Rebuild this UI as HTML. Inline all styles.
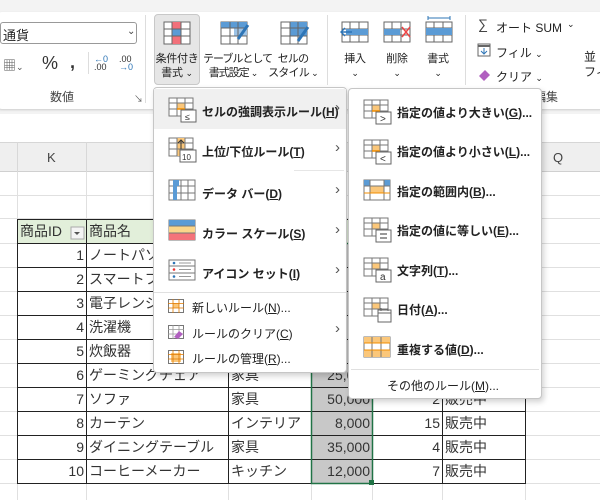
<!DOCTYPE html>
<html><head><meta charset="utf-8"><style>
*{margin:0;padding:0;box-sizing:border-box}
body{width:600px;height:500px;overflow:hidden;background:#fff;position:relative;font-family:"Liberation Sans","Noto Sans CJK JP",sans-serif;color:#222}
.a{position:absolute}
.t{font-size:12px;white-space:nowrap}
.c{font-size:11px;text-align:center;white-space:nowrap;line-height:14px;letter-spacing:-0.3px}
.mi{position:absolute;left:0;width:100%;font-size:12px;font-weight:bold;white-space:nowrap}
.mi2{position:absolute;left:0;width:100%;font-size:12px;white-space:nowrap}
.chev{position:absolute;right:6px;font-size:15px;color:#555;font-weight:normal}
.cell{position:absolute;font-size:14px;color:#333;white-space:nowrap;line-height:24px}
</style></head><body>
<div class="a" style="left:0;top:0;width:600px;height:114px;background:#f3f3f3"></div>
<div class="a" style="left:-4px;top:12px;width:610px;height:97px;background:#fff;border-radius:6px;box-shadow:0 1px 2px #ccc"></div>
<div class="a" style="left:0;top:22px;width:137px;height:22px;border:1px solid #999;border-radius:3px;background:#fff"></div>
<div class="a t" style="left:3px;top:25px;font-size:13px">通貨</div>
<div class="a t" style="left:127px;top:26px;font-size:10px;color:#444">⌄</div>
<div class="a t" style="left:3px;top:55px;font-size:13px;color:#555">▦<span style="font-size:9px">⌄</span></div>
<div class="a t" style="left:42px;top:53px;font-size:18px;color:#333">%</div>
<div class="a t" style="left:70px;top:52px;font-size:18px;font-weight:bold;color:#333">,</div>
<div class="a" style="left:88px;top:52px;width:1px;height:22px;background:#ddd"></div>
<div class="a t" style="left:94px;top:55px;font-size:9px;color:#2e75b6;line-height:8px">←0<br><span style="color:#333">.00</span></div>
<div class="a t" style="left:119px;top:55px;font-size:9px;color:#333;line-height:8px">.00<br><span style="color:#2e75b6">→0</span></div>
<div class="a t" style="left:50px;top:88px;font-size:12px;color:#444">数値</div>
<div class="a t" style="left:134px;top:92px;font-size:9px;color:#555">↘</div>
<div class="a" style="left:145px;top:15px;width:1px;height:88px;background:#ddd"></div>
<div class="a" style="left:154px;top:14px;width:46px;height:71px;background:#e6e6e6;border:1px solid #c8c8c8;border-radius:4px"></div>
<svg class="a" style="left:163px;top:21px" width="28" height="24"><rect x="1" y="1" width="26" height="22" fill="#fff" stroke="#666"/><rect x="9" y="1" width="9" height="7" fill="#f2707a"/><rect x="9" y="8" width="9" height="7" fill="#5b9bd5"/><rect x="9" y="15" width="9" height="8" fill="#f2707a"/><path d="M1 8h26M1 15h26M9 1v22M18 1v22" stroke="#666" fill="none"/></svg>
<div class="a c" style="left:154px;top:52px;width:46px">条件付き<br>書式 <span style="font-size:9px">⌄</span></div>
<svg class="a" style="left:220px;top:21px" width="30" height="26"><rect x="1" y="1" width="26" height="22" fill="#fff" stroke="#666"/><rect x="1" y="1" width="26" height="6" fill="#5b9bd5"/><rect x="14" y="7" width="13" height="8" fill="#9dc3e6"/><path d="M1 7h26M1 15h26M10 1v22M18 1v22" stroke="#666" fill="none"/><path d="M28 4l-10 14" stroke="#2e75b6" stroke-width="3"/></svg>
<div class="a c" style="left:203px;top:52px;width:60px;letter-spacing:-1px">テーブルとして<br>書式設定 <span style="font-size:9px">⌄</span></div>
<svg class="a" style="left:280px;top:21px" width="30" height="26"><rect x="1" y="1" width="26" height="22" fill="#fff" stroke="#666"/><rect x="10" y="1" width="17" height="14" fill="#5b9bd5"/><path d="M1 7h26M1 15h26M10 1v22M18 1v22" stroke="#666" fill="none"/><path d="M28 6l-10 14" stroke="#2e75b6" stroke-width="3"/></svg>
<div class="a c" style="left:268px;top:52px;width:50px;letter-spacing:-0.8px">セルの<br>スタイル <span style="font-size:9px">⌄</span></div>
<div class="a" style="left:327px;top:15px;width:1px;height:70px;background:#ddd"></div>
<svg class="a" style="left:340px;top:20px" width="30" height="24"><rect x="2" y="2" width="26" height="20" fill="#fff" stroke="#666"/><path d="M2 9h26M2 15h26M10 2v20M19 2v20" stroke="#666"/><rect x="6" y="9" width="22" height="6" fill="#5b9bd5"/><path d="M12 12H1M5 8l-4 4 4 4" stroke="#2e75b6" fill="none" stroke-width="1.5"/></svg>
<div class="a c" style="left:340px;top:52px;width:30px">挿入<br><span style="font-size:9px">⌄</span></div>
<svg class="a" style="left:382px;top:20px" width="30" height="24"><rect x="2" y="2" width="26" height="20" fill="#fff" stroke="#666"/><path d="M2 9h26M2 15h26M10 2v20M19 2v20" stroke="#666"/><rect x="2" y="9" width="16" height="6" fill="#5b9bd5"/><path d="M20 7l8 10M28 7l-8 10" stroke="#e44" stroke-width="1.5"/></svg>
<div class="a c" style="left:382px;top:52px;width:30px">削除<br><span style="font-size:9px">⌄</span></div>
<svg class="a" style="left:424px;top:16px" width="30" height="28"><path d="M4 2h22M4 0v4M26 0v4" stroke="#2e75b6"/><rect x="2" y="6" width="26" height="20" fill="#fff" stroke="#666"/><path d="M2 12h26M2 19h26M10 6v20M19 6v20" stroke="#666"/><rect x="2" y="12" width="26" height="7" fill="#5b9bd5"/></svg>
<div class="a c" style="left:423px;top:52px;width:30px">書式<br><span style="font-size:9px">⌄</span></div>
<div class="a" style="left:465px;top:15px;width:1px;height:70px;background:#ddd"></div>
<div class="a t" style="left:478px;top:16px;font-size:14px;color:#444">∑</div>
<div class="a t" style="left:496px;top:19px">オート SUM</div>
<div class="a t" style="left:567px;top:19px;font-size:9px">⌄</div>
<svg class="a" style="left:477px;top:43px" width="14" height="14"><rect x="1" y="1" width="12" height="12" fill="#fff" stroke="#666"/><path d="M1 3h12" stroke="#666" stroke-width="2"/><path d="M7 5v6M4 8l3 3 3-3" stroke="#2e75b6" fill="none"/></svg>
<div class="a t" style="left:496px;top:44px">フィル <span style="font-size:9px">⌄</span></div>
<svg class="a" style="left:477px;top:67px" width="14" height="14"><path d="M2 9l6-6 5 5-6 6z" fill="#b160c0"/></svg>
<div class="a t" style="left:496px;top:68px">クリア <span style="font-size:9px">⌄</span></div>
<div class="a t" style="left:584px;top:50px;line-height:15px">並<br>フィ</div>
<div class="a t" style="left:534px;top:88px;color:#444">編集</div>
<div class="a" style="left:0;top:114px;width:600px;height:28px;background:#fff"></div>
<div class="a" style="left:0;top:142px;width:600px;height:30px;background:#efefef;border-top:1px solid #d6d6d6;border-bottom:1px solid #d0d0d0"></div>
<div class="a" style="left:17px;top:142px;width:1px;height:30px;background:#d8d8d8"></div>
<div class="a" style="left:86px;top:142px;width:1px;height:30px;background:#d8d8d8"></div>
<div class="a" style="left:525px;top:142px;width:1px;height:30px;background:#d8d8d8"></div>
<div class="a t" style="left:47px;top:150px;font-size:13px;color:#444">K</div>
<div class="a t" style="left:553px;top:150px;font-size:13px;color:#444">Q</div>
<svg class="a" style="left:0;top:172px" width="600" height="328">
<g stroke="#e0e0e0">
<path d="M0 23.5h600M0 46.5h600M0 71.5h600M0 95.5h600M0 119.5h600M0 143.5h600M0 167.5h600M0 191.5h600M0 215.5h600M0 239.5h600M0 263.5h600M0 287.5h600M0 311.5h600"/>
<path d="M17.5 0v328M86.5 0v328M228.5 0v328M311.5 0v328M372.5 0v328M442.5 0v328M525.5 0v328"/>
</g>
<rect x="17" y="47" width="411" height="24" fill="#e2efda"/>
<rect x="311" y="71" width="61" height="240" fill="#c8c8c8"/>
<g stroke="#222" stroke-width="1">
<path d="M17.5 47.5h508M17.5 71.5h508M17.5 95.5h508M17.5 119.5h508M17.5 143.5h508M17.5 167.5h508M17.5 191.5h508M17.5 215.5h508M17.5 239.5h508M17.5 263.5h508M17.5 287.5h508M17.5 311.5h508"/>
<path d="M17.5 47v265M86.5 47v265M228.5 47v265M311.5 47v265M372.5 47v265M442.5 47v265M525.5 47v265"/>
</g>
<rect x="311.5" y="71.5" width="61" height="240" fill="none" stroke="#217346" stroke-width="1.5"/>
<rect x="369" y="308" width="5" height="5" fill="#217346"/>
<rect x="71" y="55" width="13" height="12" fill="#f4f4f4" stroke="#aaa"/>
<path d="M74 60l3 3 3-3z" fill="#555"/>
</svg>
<div class="cell" style="left:20px;top:219px">商品ID</div>
<div class="cell" style="left:89px;top:219px">商品名</div>
<div class="cell" style="left:17px;top:243px;width:67px;text-align:right">1</div><div class="cell" style="left:89px;top:243px">ノートパソ</div>
<div class="cell" style="left:17px;top:267px;width:67px;text-align:right">2</div><div class="cell" style="left:89px;top:267px">スマートフ</div>
<div class="cell" style="left:17px;top:291px;width:67px;text-align:right">3</div><div class="cell" style="left:89px;top:291px">電子レンジ</div>
<div class="cell" style="left:17px;top:315px;width:67px;text-align:right">4</div><div class="cell" style="left:89px;top:315px">洗濯機</div>
<div class="cell" style="left:17px;top:339px;width:67px;text-align:right">5</div><div class="cell" style="left:89px;top:339px">炊飯器</div>
<div class="cell" style="left:17px;top:363px;width:67px;text-align:right">6</div><div class="cell" style="left:89px;top:363px">ゲーミングチェア</div><div class="cell" style="left:231px;top:363px">家具</div><div class="cell" style="left:311px;top:363px;width:59px;text-align:right">25,000</div>
<div class="cell" style="left:17px;top:387px;width:67px;text-align:right">7</div><div class="cell" style="left:89px;top:387px">ソファ</div><div class="cell" style="left:231px;top:387px">家具</div><div class="cell" style="left:311px;top:387px;width:59px;text-align:right">50,000</div><div class="cell" style="left:372px;top:387px;width:68px;text-align:right">2</div><div class="cell" style="left:445px;top:387px">販売中</div>
<div class="cell" style="left:17px;top:411px;width:67px;text-align:right">8</div><div class="cell" style="left:89px;top:411px">カーテン</div><div class="cell" style="left:231px;top:411px">インテリア</div><div class="cell" style="left:311px;top:411px;width:59px;text-align:right">8,000</div><div class="cell" style="left:372px;top:411px;width:68px;text-align:right">15</div><div class="cell" style="left:445px;top:411px">販売中</div>
<div class="cell" style="left:17px;top:435px;width:67px;text-align:right">9</div><div class="cell" style="left:89px;top:435px">ダイニングテーブル</div><div class="cell" style="left:231px;top:435px">家具</div><div class="cell" style="left:311px;top:435px;width:59px;text-align:right">35,000</div><div class="cell" style="left:372px;top:435px;width:68px;text-align:right">4</div><div class="cell" style="left:445px;top:435px">販売中</div>
<div class="cell" style="left:17px;top:459px;width:67px;text-align:right">10</div><div class="cell" style="left:89px;top:459px">コーヒーメーカー</div><div class="cell" style="left:231px;top:459px">キッチン</div><div class="cell" style="left:311px;top:459px;width:59px;text-align:right">12,000</div><div class="cell" style="left:372px;top:459px;width:68px;text-align:right">7</div><div class="cell" style="left:445px;top:459px">販売中</div>

<div class="a" style="left:153px;top:87px;width:194px;height:286px;background:#fff;border:1px solid #c6c6c6;border-radius:4px;box-shadow:2px 3px 6px rgba(0,0,0,.18)">
 <div class="a" style="left:0;top:1px;width:192px;height:40px;background:#f0f0f0"></div>
 <div class="a" style="left:0;top:204px;width:192px;height:1px;background:#e0e0e0"></div>
 <div class="a" style="left:140px;top:82px;width:50px;height:1px;background:#e6e6e6"></div>
 <svg class="a" style="left:14px;top:9px" width="30" height="26"><rect x="1" y="1" width="24" height="18" fill="#fff" stroke="#777"/><rect x="9" y="6" width="8" height="6" fill="#fbc77a"/><path d="M1 6h24M1 12h24M9 1v18M17 1v18" stroke="#777"/><path d="M9 12h8" stroke="#f08c00" stroke-width="1.5"/><rect x="13" y="13" width="15" height="12" fill="#fff" stroke="#666"/><text x="17" y="23" font-size="9" fill="#333">≤</text></svg>
 <div class="mi" style="left:48px;top:15px">セルの強調表示ルール(<u>H</u>)</div><div class="chev" style="top:11px">›</div>
 <svg class="a" style="left:14px;top:49px" width="30" height="26"><rect x="1" y="1" width="24" height="18" fill="#fff" stroke="#777"/><rect x="9" y="1" width="8" height="18" fill="#fbc77a"/><path d="M1 6h24M1 12h24M9 1v18M17 1v18" stroke="#777"/><path d="M13 12V3M10 6l3-3 3 3" stroke="#333" fill="none"/><rect x="12" y="13" width="16" height="12" fill="#fff" stroke="#666"/><text x="14" y="23" font-size="8" fill="#333">10</text></svg>
 <div class="mi" style="left:48px;top:55px">上位/下位ルール(<u>T</u>)</div><div class="chev" style="top:51px">›</div>
 <svg class="a" style="left:14px;top:91px" width="30" height="24"><rect x="1" y="1" width="26" height="20" fill="#fff" stroke="#777"/><path d="M1 7h26M1 14h26M13 1v20M20 1v20" stroke="#777"/><rect x="5" y="1" width="6" height="6" fill="#5b9bd5"/><rect x="5" y="7" width="4" height="14" fill="#5b9bd5"/></svg>
 <div class="mi" style="left:48px;top:97px">データ バー(<u>D</u>)</div><div class="chev" style="top:93px">›</div>
 <svg class="a" style="left:14px;top:131px" width="30" height="24"><rect x="1" y="1" width="26" height="20" fill="#fff" stroke="#777"/><rect x="1" y="1" width="26" height="6" fill="#5b9bd5"/><rect x="1" y="7" width="26" height="7" fill="#fbd58a"/><rect x="1" y="14" width="26" height="7" fill="#f4737a"/><path d="M1 7h26M1 14h26" stroke="#777"/></svg>
 <div class="mi" style="left:48px;top:137px">カラー スケール(<u>S</u>)</div><div class="chev" style="top:133px">›</div>
 <svg class="a" style="left:14px;top:171px" width="30" height="24"><rect x="1" y="1" width="26" height="20" fill="#fff" stroke="#777"/><path d="M1 7h26M1 14h26" stroke="#777"/><circle cx="6" cy="4" r="1.3" fill="#2e75b6"/><circle cx="6" cy="10.5" r="1.3" fill="#e33"/><circle cx="6" cy="17.5" r="1.3" fill="#2e75b6"/><path d="M11 4h12M11 10.5h12M11 17.5h12" stroke="#999"/></svg>
 <div class="mi" style="left:48px;top:177px">アイコン セット(<u>I</u>)</div><div class="chev" style="top:173px">›</div>
 <svg class="a" style="left:14px;top:211px" width="16" height="14"><rect x="0.5" y="0.5" width="15" height="13" fill="#fff" stroke="#777"/><rect x="5" y="4" width="6" height="5" fill="#fbc77a"/><path d="M0 4.5h16M0 9h16M5 0v14M11 0v14" stroke="#e07a00" stroke-width=".8"/></svg>
 <div class="mi2" style="left:38px;top:211px">新しいルール(<u>N</u>)...</div>
 <svg class="a" style="left:14px;top:237px" width="16" height="14"><rect x="0.5" y="0.5" width="15" height="13" fill="#fff" stroke="#777"/><path d="M0 4.5h16M0 9h16M5 0v14M11 0v14" stroke="#999" stroke-width=".8"/><path d="M6 12l5-6 4 3-5 5z" fill="#b160c0"/></svg>
 <div class="mi2" style="left:38px;top:237px">ルールのクリア(<u>C</u>)</div><div class="chev" style="top:232px">›</div>
 <svg class="a" style="left:14px;top:262px" width="16" height="14"><rect x="0.5" y="0.5" width="15" height="13" fill="#fff" stroke="#777"/><rect x="3" y="3" width="10" height="9" fill="#fbc77a"/><path d="M0 4.5h16M0 9h16M5 0v14M11 0v14" stroke="#e07a00" stroke-width=".8"/></svg>
 <div class="mi2" style="left:38px;top:262px">ルールの管理(<u>R</u>)...</div>
</div>

<div class="a" style="left:348px;top:88px;width:194px;height:311px;background:#fff;border:1px solid #c6c6c6;border-radius:4px;box-shadow:2px 3px 6px rgba(0,0,0,.18)">
 <div class="a" style="left:2px;top:280px;width:188px;height:1px;background:#e0e0e0"></div>
 <svg class="a" style="left:14px;top:10px" width="30" height="28"><rect x="1" y="1" width="24" height="18" fill="#fff" stroke="#777"/><rect x="9" y="6" width="8" height="6" fill="#fbc77a"/><path d="M1 6h24M1 12h24M9 1v18M17 1v18" stroke="#777"/><path d="M9 12h8" stroke="#f08c00" stroke-width="1.5"/><rect x="13" y="13" width="15" height="12" fill="#fff" stroke="#666"/><text x="17" y="23" font-size="10" fill="#333">&gt;</text></svg>
 <div class="mi" style="left:48px;top:15px">指定の値より大きい(<u>G</u>)...</div>
 <svg class="a" style="left:14px;top:50px" width="30" height="28"><rect x="1" y="1" width="24" height="18" fill="#fff" stroke="#777"/><rect x="9" y="6" width="8" height="6" fill="#fbc77a"/><path d="M1 6h24M1 12h24M9 1v18M17 1v18" stroke="#777"/><path d="M9 12h8" stroke="#f08c00" stroke-width="1.5"/><rect x="13" y="13" width="15" height="12" fill="#fff" stroke="#666"/><text x="17" y="23" font-size="10" fill="#333">&lt;</text></svg>
 <div class="mi" style="left:48px;top:54px">指定の値より小さい(<u>L</u>)...</div>
 <svg class="a" style="left:14px;top:90px" width="30" height="24"><rect x="1" y="1" width="26" height="20" fill="#fff" stroke="#777"/><rect x="1" y="1" width="6" height="6" fill="#5b9bd5"/><rect x="21" y="1" width="6" height="6" fill="#5b9bd5"/><rect x="7" y="7" width="14" height="7" fill="#fbc77a"/><path d="M1 7h26M1 14h26M7 1v20M21 1v20" stroke="#777"/><path d="M1 14h26" stroke="#f08c00"/></svg>
 <div class="mi" style="left:48px;top:94px">指定の範囲内(<u>B</u>)...</div>
 <svg class="a" style="left:14px;top:128px" width="30" height="28"><rect x="1" y="1" width="24" height="18" fill="#fff" stroke="#777"/><rect x="9" y="6" width="8" height="6" fill="#fbc77a"/><path d="M1 6h24M1 12h24M9 1v18M17 1v18" stroke="#777"/><rect x="13" y="13" width="15" height="12" fill="#fff" stroke="#666"/><path d="M17 17h7M17 21h7" stroke="#333"/></svg>
 <div class="mi" style="left:48px;top:133px">指定の値に等しい(<u>E</u>)...</div>
 <svg class="a" style="left:14px;top:168px" width="30" height="28"><rect x="1" y="1" width="24" height="18" fill="#fff" stroke="#777"/><rect x="9" y="6" width="8" height="6" fill="#fbc77a"/><path d="M1 6h24M1 12h24M9 1v18M17 1v18" stroke="#777"/><rect x="13" y="13" width="15" height="12" fill="#fff" stroke="#666"/><text x="17" y="23" font-size="10" fill="#333">a</text></svg>
 <div class="mi" style="left:48px;top:173px">文字列(<u>T</u>)...</div>
 <svg class="a" style="left:14px;top:208px" width="30" height="28"><rect x="1" y="1" width="24" height="18" fill="#fff" stroke="#777"/><rect x="9" y="6" width="8" height="6" fill="#fbc77a"/><path d="M1 6h24M1 12h24M9 1v18M17 1v18" stroke="#777"/><rect x="15" y="13" width="13" height="12" fill="#fff" stroke="#666"/><path d="M15 16h13M18 11v3M25 11v3" stroke="#666"/></svg>
 <div class="mi" style="left:48px;top:212px">日付(<u>A</u>)...</div>
 <svg class="a" style="left:14px;top:247px" width="30" height="24"><rect x="1" y="1" width="26" height="20" fill="#fff" stroke="#777"/><rect x="1" y="1" width="26" height="6" fill="#fbc77a"/><rect x="1" y="14" width="26" height="7" fill="#fbc77a"/><path d="M1 7h26M1 14h26M9 1v20M18 1v20" stroke="#777"/><path d="M1 7h26M1 14h26" stroke="#f08c00"/></svg>
 <div class="mi" style="left:48px;top:252px">重複する値(<u>D</u>)...</div>
 <div class="mi2" style="left:0;top:288px;text-align:center;width:188px">その他のルール(<u>M</u>)...</div>
</div>
</body></html>
